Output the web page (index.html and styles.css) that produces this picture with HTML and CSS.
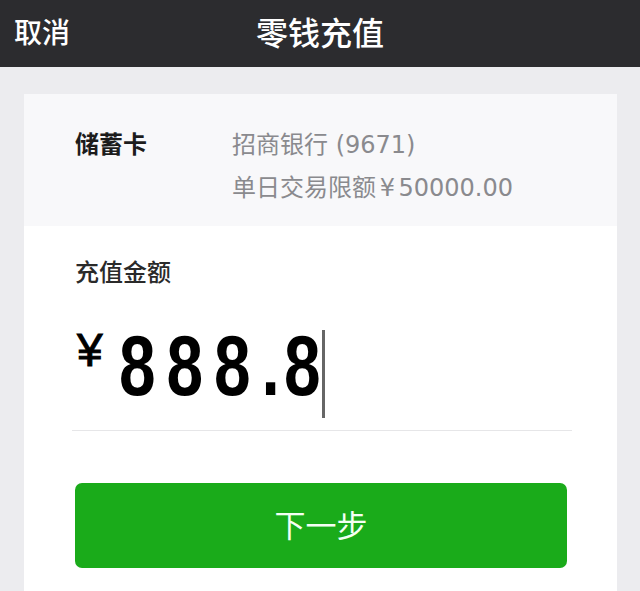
FILE: index.html
```html
<!DOCTYPE html>
<html lang="zh">
<head>
<meta charset="utf-8">
<title>零钱充值</title>
<link rel="stylesheet" href="styles.css">
</head>
<body>
<header class="nav">
  <div class="nav-left">取消</div>
  <div class="nav-title">零钱充值</div>
  <div class="nav-right"></div>
</header>
<main class="main">
  <section class="card">
    <div class="card-top">
      <div class="card-label">储蓄卡</div>
      <div class="card-info">
        <div class="bank">招商银行 (9671)</div>
        <div class="limit">单日交易限额 ¥ 50000.00</div>
      </div>
    </div>
    <div class="card-body">
      <div class="amount-label">充值金额</div>
      <div class="amount-row">
        <span class="yen">¥</span>
        <span class="amount">888<span class="dot">.</span>8</span>
        <span class="caret"></span>
      </div>
      <div class="divider"></div>
      <button class="btn-next">下一步</button>
    </div>
  </section>
</main>
</body>
</html>
```
FILE: styles.css
```css
* { box-sizing: border-box; }
html, body { margin: 0; padding: 0; }
body {
  width: 640px;
  height: 591px;
  overflow: hidden;
  background: #ececef;
  font-family: "Liberation Sans", "Noto Sans CJK SC", sans-serif;
}
.nav {
  height: 67px;
  background: #2c2c2f;
  color: #fff;
  display: grid;
  grid-template-columns: 1fr auto 1fr;
  align-items: center;
  padding: 0 14px;
}
.nav-left { font-size: 28px; padding-bottom: 6px; font-weight: 500; }
.nav-title { font-size: 32px; padding-bottom: 6px; font-weight: 500; }
.main { padding: 27px 23px 0 24px; }
.card { background: #fff; height: 520px; }
.card-top {
  background: #f8f8fa;
  height: 132px;
  display: flex;
  padding: 30px 0 0 51px;
}
.card-label {
  width: 157px;
  font-size: 24px;
  font-weight: bold;
  color: #1c1c1c;
  line-height: 42px;
}
.card-info {
  color: #8a8a8e;
  font-family: "DejaVu Sans", "Noto Sans CJK SC", sans-serif;
  font-size: 24px;
  line-height: 43px;
}
.limit { word-spacing: -4px; }
.card-body { padding: 0 50px 0 51px; }
.amount-label {
  font-size: 24px;
  color: #2a2a2a;
  font-weight: 500;
  padding-top: 31px;
  line-height: 32px;
}
.amount-row {
  display: flex;
  align-items: flex-start;
  height: 141px;
  padding-top: 26px;
  color: #000;
}
.yen {
  font-size: 46px;
  line-height: 60px;
  margin-top: 5px;
  margin-left: 2px;
  width: 42px;
  -webkit-text-stroke: 1px #000;
}
.amount {
  display: inline-block;
  font-size: 86px;
  font-weight: bold;
  line-height: 100px;
  letter-spacing: 14.3px;
  transform: scaleX(0.765);
  transform-origin: left center;
  margin-right: -75px;
  white-space: nowrap;
}
.dot { letter-spacing: 5.5px; }
.caret {
  width: 3px;
  height: 88px;
  background: #666;
  margin-top: 15px;
}
.divider { height: 1px; background: #e6e6e8; margin: 0 -5px 0 -3px; }
.btn-next {
  display: block;
  width: 100%;
  height: 85px;
  margin-top: 52px;
  border: 0;
  border-radius: 7px;
  background: #1aab1a;
  color: #f4fff4;
  font-family: "Liberation Sans", "Noto Sans CJK SC", sans-serif;
  font-size: 31px;
  padding: 0 0 4px;
}
```
